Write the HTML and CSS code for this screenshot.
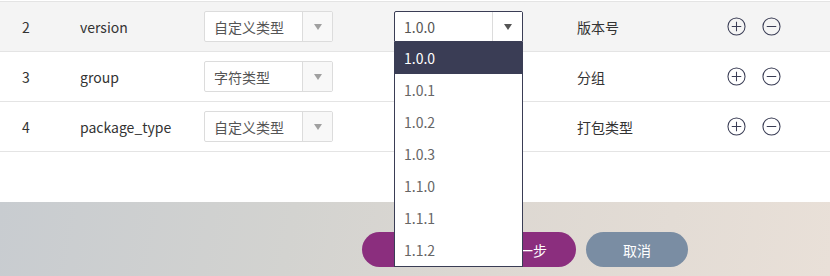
FILE: index.html
```html
<!DOCTYPE html>
<html lang="zh-CN">
<head>
    <meta charset="UTF-8">
    <title>参数配置</title>
    <link rel="stylesheet" href="styles.css">
</head>
<body>
    <div class="param-table">
        <div class="param-row active">
            <div class="cell idx">2</div>
            <div class="cell name">version</div>
            <div class="cell">
                <div class="select">
                    <span class="select-text">自定义类型</span>
                    <span class="select-arrow"></span>
                </div>
            </div>
            <div class="cell">
                <div class="select open">
                    <span class="select-text">1.0.0</span>
                    <span class="select-arrow"></span>
                    <ul class="dropdown">
                        <li class="selected">1.0.0</li>
                        <li>1.0.1</li>
                        <li>1.0.2</li>
                        <li>1.0.3</li>
                        <li>1.1.0</li>
                        <li>1.1.1</li>
                        <li>1.1.2</li>
                    </ul>
                </div>
            </div>
            <div class="cell desc">版本号</div>
            <div class="cell ops">
                <svg class="op" viewBox="0 0 20 20"><circle cx="10" cy="10" r="9"/><path d="M5 10h10M10 5v10"/></svg>
                <svg class="op" viewBox="0 0 20 20"><circle cx="10" cy="10" r="9"/><path d="M5 10h10"/></svg>
            </div>
        </div>
        <div class="param-row">
            <div class="cell idx">3</div>
            <div class="cell name">group</div>
            <div class="cell">
                <div class="select">
                    <span class="select-text">字符类型</span>
                    <span class="select-arrow"></span>
                </div>
            </div>
            <div class="cell"></div>
            <div class="cell desc">分组</div>
            <div class="cell ops">
                <svg class="op" viewBox="0 0 20 20"><circle cx="10" cy="10" r="9"/><path d="M5 10h10M10 5v10"/></svg>
                <svg class="op" viewBox="0 0 20 20"><circle cx="10" cy="10" r="9"/><path d="M5 10h10"/></svg>
            </div>
        </div>
        <div class="param-row">
            <div class="cell idx">4</div>
            <div class="cell name">package_type</div>
            <div class="cell">
                <div class="select">
                    <span class="select-text">自定义类型</span>
                    <span class="select-arrow"></span>
                </div>
            </div>
            <div class="cell"></div>
            <div class="cell desc">打包类型</div>
            <div class="cell ops">
                <svg class="op" viewBox="0 0 20 20"><circle cx="10" cy="10" r="9"/><path d="M5 10h10M10 5v10"/></svg>
                <svg class="op" viewBox="0 0 20 20"><circle cx="10" cy="10" r="9"/><path d="M5 10h10"/></svg>
            </div>
        </div>
    </div>
    <div class="footer">
        <button class="btn btn-next">下一步</button>
        <button class="btn btn-cancel">取消</button>
    </div>
</body>
</html>
```

FILE: styles.css
```css
body {
    margin: 0;
    font-family: "Noto Sans CJK SC", "Noto Sans", sans-serif;
    font-size: 14px;
    color: #333;
    background-color: #fff;
}

.param-table {
    margin-top: 1px;
    border-top: 1px solid #e4e4e4;
}

.param-row {
    display: grid;
    grid-template-columns: 80px 124px 190px 183px 150px 1fr;
    height: 49px;
    border-bottom: 1px solid #e4e4e4;
}

.param-row.active {
    background-color: #f4f4f4;
}

.cell {
    display: flex;
    align-items: center;
}

.idx {
    padding-left: 22px;
}

.desc {
    color: #333;
}

.ops {
    gap: 16px;
}

.op {
    width: 19px;
    height: 19px;
    fill: none;
    stroke: #3a3d55;
    stroke-width: 1.1;
}

.select {
    position: relative;
    display: flex;
    width: 129px;
    height: 31px;
    box-sizing: border-box;
    border: 1px solid #dcdcdc;
    border-radius: 2px;
    background-color: #fff;
}

.select-text {
    flex: 1;
    display: flex;
    align-items: center;
    padding-left: 9px;
    color: #555;
}

.select-arrow {
    width: 29px;
    border-left: 1px solid #dcdcdc;
    background-color: #f8f8f8;
    position: relative;
}

.select-arrow::after {
    content: "";
    position: absolute;
    left: 11px;
    top: 12px;
    border-left: 4px solid transparent;
    border-right: 4px solid transparent;
    border-top: 6px solid #a0a0a0;
}

.select.open {
    border-color: #3a3d55;
    border-radius: 2px 2px 0 0;
}

.select.open .select-arrow {
    background-color: #fff;
}

.select.open .select-arrow::after {
    border-top-color: #555;
}

.dropdown {
    position: absolute;
    top: 30px;
    left: -1px;
    width: 129px;
    box-sizing: border-box;
    margin: 0;
    padding: 0;
    list-style: none;
    background-color: #fff;
    border: 1px solid #3a3d55;
    border-top: none;
    z-index: 10;
}

.dropdown li {
    height: 32px;
    line-height: 32px;
    padding-left: 9px;
    color: #666;
}

.dropdown li.selected {
    background-color: #3a3d55;
    color: #fff;
}

.footer {
    margin-top: 50px;
    height: 74px;
    box-sizing: border-box;
    padding: 30px 0 0 362px;
    display: flex;
    align-items: flex-start;
    gap: 10px;
    background: linear-gradient(100deg, #c8ccd0 0%, #d3d3d0 35%, #ddd8d2 60%, #e9e0d8 100%);
}

.btn {
    height: 35px;
    border: none;
    border-radius: 18px;
    color: #fff;
    font-family: inherit;
    font-size: 14px;
    cursor: pointer;
}

.btn-next {
    width: 214px;
    background-color: #8b2e7e;
    text-align: right;
    padding-right: 29px;
}

.btn-cancel {
    width: 102px;
    background-color: #7a8da3;
}
```
